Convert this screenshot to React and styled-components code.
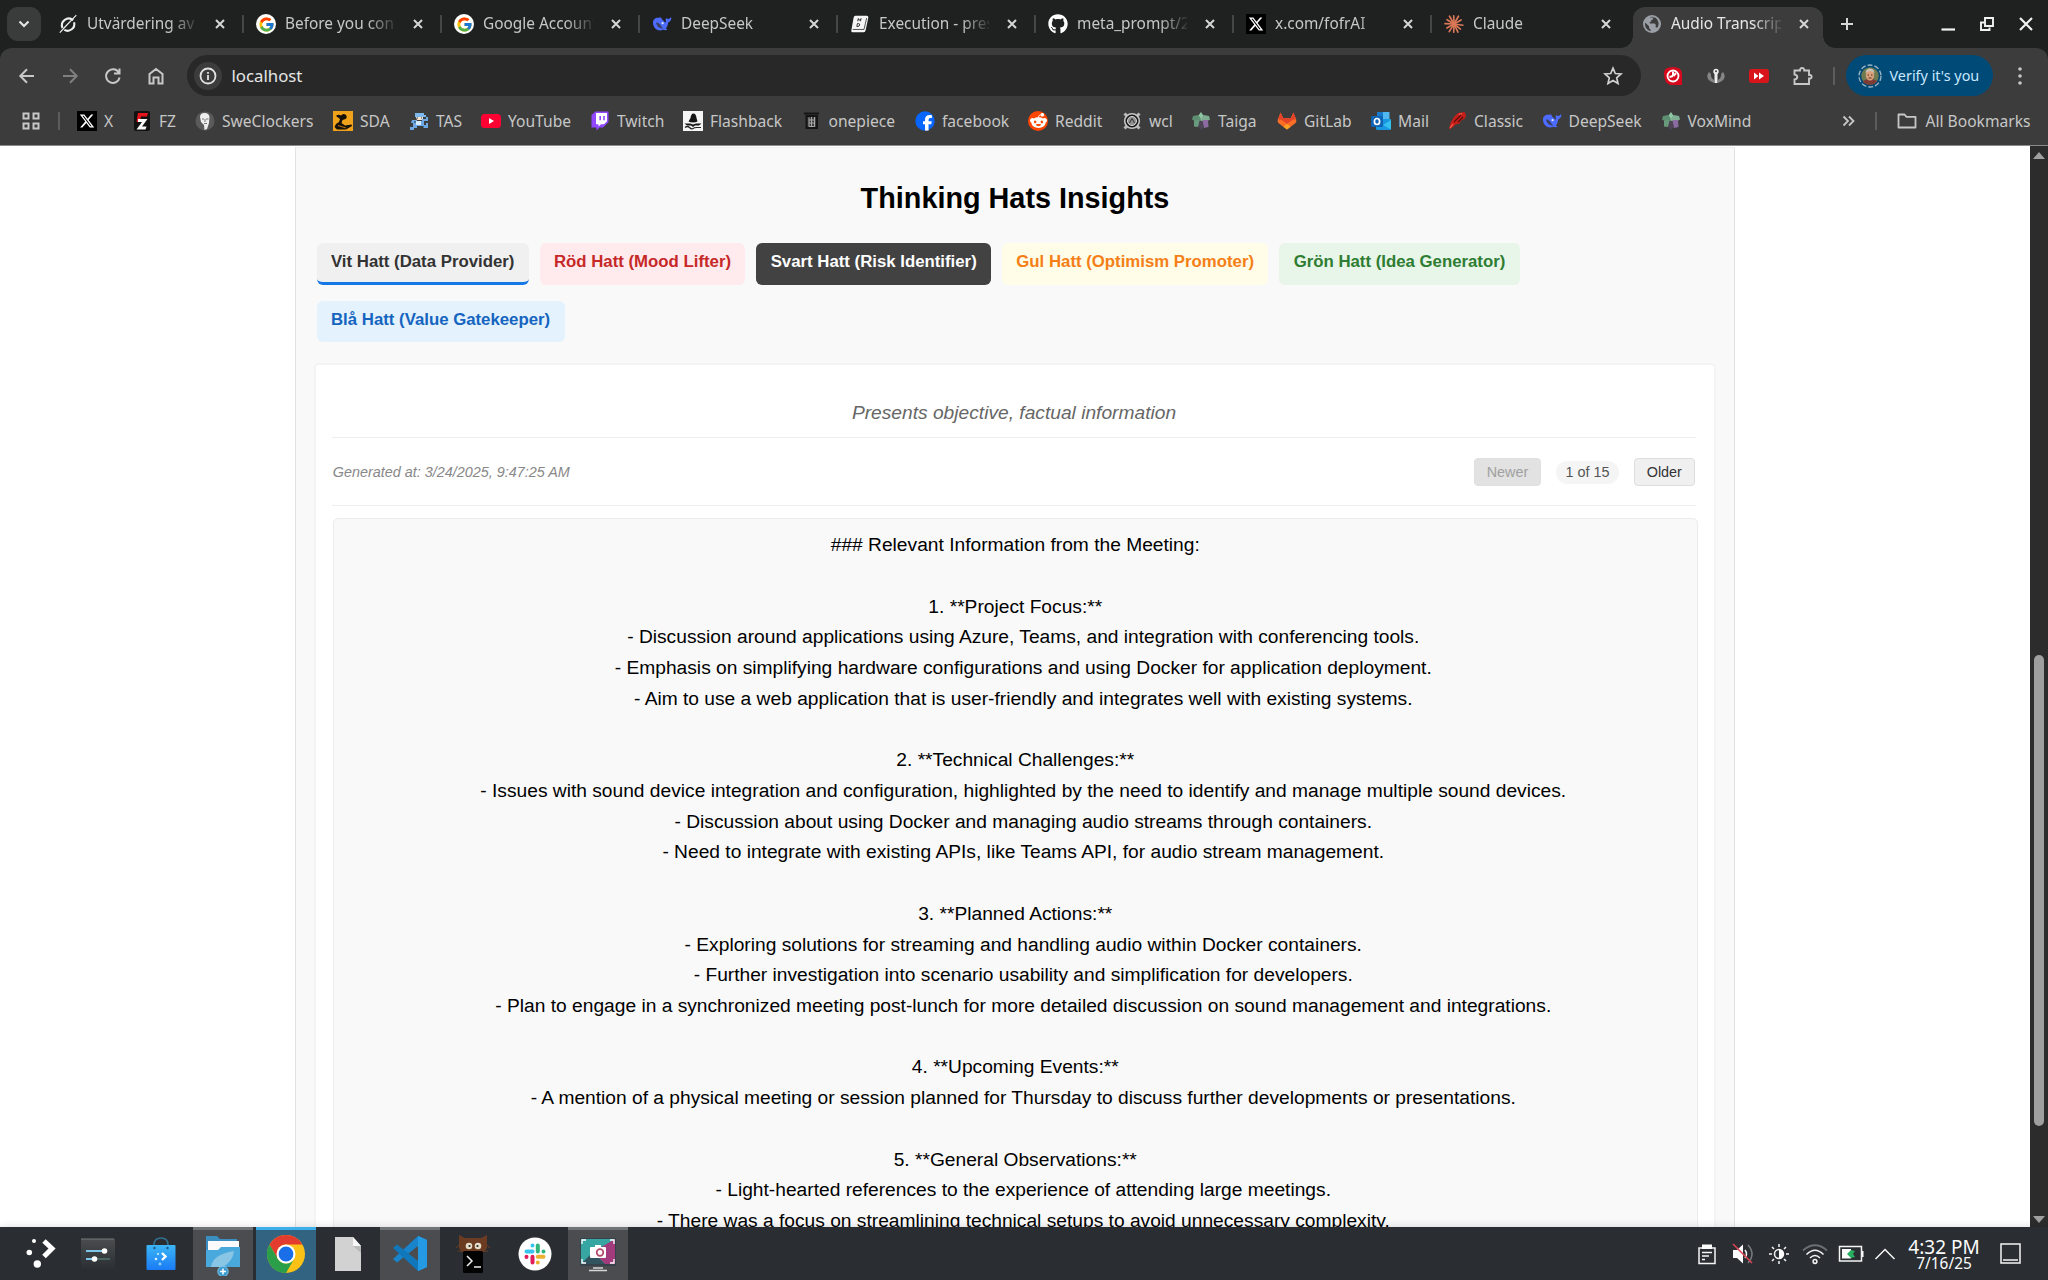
import React from "react";
import styled, { createGlobalStyle } from "styled-components";
import { FaXTwitter, FaGithub, FaRedditAlien, FaFacebookF } from "react-icons/fa6";
import { FcGoogle } from "react-icons/fc";

const Global = createGlobalStyle`
  * { box-sizing: border-box; }
  html, body { margin: 0; padding: 0; }
  body { width: 2048px; height: 1280px; overflow: hidden; background: #fff; }
`;

const Screen = styled.div`
  width: 2048px;
  height: 1280px;
  display: flex;
  flex-direction: column;
  overflow: hidden;
  font-family: "Noto Sans", sans-serif;
`;

/* ---------- tab strip ---------- */
const TabStrip = styled.div`
  height: 48px;
  flex: none;
  display: flex;
  padding-left: 7px;
  background: #1f2120;
`;
const TabSearch = styled.div`
  width: 34px;
  height: 34px;
  margin: 7px 4px 0 0;
  border-radius: 11px;
  background: #3a3b3b;
  display: flex;
  align-items: center;
  justify-content: center;
`;
const TabCell = styled.div`
  width: 198px;
  height: 48px;
  flex: none;
  padding: ${(p) => (p.$active ? "7px 4px 0" : "0 4px")};
  display: flex;
  position: relative;
  &::after {
    content: "";
    display: ${(p) => (p.$divider ? "block" : "none")};
    position: absolute;
    right: -1px;
    top: 15px;
    width: 2px;
    height: 18px;
    background: #454746;
  }
`;
const TabBody = styled.div`
  flex: 1;
  display: flex;
  align-items: center;
  padding: ${(p) => (p.$active ? "0 0 7px 9px" : "0 0 0 9px")};
  position: relative;
  border-radius: 12px 12px 0 0;
  background: ${(p) => (p.$active ? "#3c3c3c" : "transparent")};
  color: ${(p) => (p.$active ? "#e6e6e6" : "#c7c7c7")};
  &::before, &::after {
    content: "";
    display: ${(p) => (p.$active ? "block" : "none")};
    position: absolute;
    bottom: 0;
    width: 12px;
    height: 12px;
  }
  &::before { left: -12px; background: radial-gradient(circle at 0 0, transparent 11.5px, #3c3c3c 12px); }
  &::after { right: -12px; background: radial-gradient(circle at 100% 0, transparent 11.5px, #3c3c3c 12px); }
`;
const TabIcon = styled.div`
  width: 20px;
  height: 20px;
  flex: none;
  margin-right: 9px;
  display: flex;
  align-items: center;
  justify-content: center;
`;
const TabTitle = styled.div`
  width: 110px;
  flex: none;
  overflow: hidden;
  white-space: nowrap;
  font-size: 15.4px;
  line-height: 22px;
  mask-image: linear-gradient(90deg, #000 82px, rgba(0, 0, 0, 0.12) 110px);
`;
const TabClose = styled.div`
  margin-left: 14.5px;
  width: 17px;
  display: flex;
  justify-content: center;
`;
const NewTab = styled.div`
  width: 20px;
  margin-left: 10px;
  display: flex;
  align-items: center;
`;
const WindowButtons = styled.div`
  margin-left: 83px;
  display: flex;
  align-items: center;
  gap: 23px;
`;

/* ---------- toolbar ---------- */
const ToolbarBack = styled.div`
  flex: none;
  background: #1f2120;
`;
const Toolbar = styled.div`
  height: 98px;
  background: #3c3c3c;
  border-radius: 12px 12px 0 0;
  border-bottom: 1px solid #8b8b8b;
`;
const NavRow = styled.div`
  height: 55px;
  padding: 7px 0 0 14.5px;
  display: flex;
  align-items: flex-start;
`;
const NavSlot = styled.div`
  width: ${(p) => p.$w || 43}px;
  height: 41px;
  display: flex;
  align-items: center;
  flex: none;
`;
const Omnibox = styled.div`
  width: 1454px;
  height: 41px;
  flex: none;
  border-radius: 21px;
  background: #282828;
  display: flex;
  align-items: center;
  padding: 0 18px 0 7px;
  color: #e6e6e6;
  font-size: 16.8px;
  margin-right: 22px;
`;
const InfoBubble = styled.div`
  width: 28px;
  height: 28px;
  border-radius: 50%;
  background: #3c3c3c;
  margin-right: 10px;
  display: flex;
  align-items: center;
  justify-content: center;
`;
const Url = styled.div`
  flex: 1;
`;
const VLine = styled.div`
  width: 2px;
  height: 18px;
  background: #5c5c5c;
  flex: none;
`;
const VerifyPill = styled.div`
  width: 147px;
  height: 41px;
  flex: none;
  margin-right: 25px;
  border-radius: 21px;
  background: #004a77;
  display: flex;
  align-items: center;
  padding-left: 12px;
  gap: 8px;
  color: #c8e8ff;
  font-size: 14.4px;
  white-space: nowrap;
`;
const BookmarkRow = styled.div`
  height: 35px;
  display: flex;
  align-items: center;
  padding-left: 22px;
  color: #c7c7c7;
  font-size: 15.6px;
`;
const Bookmark = styled.div`
  width: ${(p) => p.$w}px;
  height: 34px;
  display: flex;
  align-items: center;
  gap: 7px;
  white-space: nowrap;
  flex: none;
`;
const BookmarkIcon = styled.div`
  width: 20px;
  height: 20px;
  display: flex;
  align-items: center;
  justify-content: center;
  flex: none;
`;
const AppsButton = styled.div`
  width: 35.5px;
  margin-right: 0;
  display: flex;
  align-items: center;
`;
const BookmarkList = styled.div`
  display: flex;
  margin-left: 17.5px;
`;
const Overflow = styled.div`
  width: 33px;
  margin-left: 88px;
  display: flex;
`;
const AllBookmarks = styled.div`
  display: flex;
  align-items: center;
  gap: 9px;
  margin-left: 20px;
  white-space: nowrap;
`;
const IconTile = styled.div`
  width: 20px;
  height: 20px;
  display: flex;
  align-items: center;
  justify-content: center;
  border-radius: ${(p) => (p.$round ? "50%" : "0")};
  background: ${(p) => p.$bg || "transparent"};
  color: ${(p) => p.$fg || "#fff"};
`;

/* ---------- page ---------- */
const Viewport = styled.div`
  flex: 1;
  min-height: 0;
  display: flex;
  overflow: hidden;
  background: #fff;
  font-family: "Liberation Sans", Arial, sans-serif;
`;
const Page = styled.div`
  width: 2030px;
  height: 100%;
  overflow: hidden;
  display: flex;
  justify-content: center;
  padding-top: 1px;
`;
const Panel = styled.div`
  width: 1440px;
  height: 1300px;
  flex: none;
  background: #f9f9f9;
  border: 1px solid #e2e2e2;
  border-top-color: #f0f0f0;
  border-bottom: 0;
  padding: 34px 18px 0;
`;
const Heading = styled.h2`
  margin: 0 0 28px;
  height: 33px;
  text-align: center;
  font-size: 28.8px;
  line-height: 33px;
  color: #000;
`;
const HatTabs = styled.div`
  display: flex;
  flex-wrap: wrap;
  gap: 16px 10.8px;
  padding-left: 2.6px;
  margin-bottom: 21px;
`;
const HatTab = styled.button`
  height: 41.6px;
  padding: 0 14.4px 0.5px;
  border: 0;
  border-bottom: 3.6px solid ${(p) => (p.$active ? "#1677e6" : p.$bg)};
  border-radius: 6px;
  background: ${(p) => p.$bg};
  color: ${(p) => p.$fg};
  font: bold 16.8px "Liberation Sans", Arial, sans-serif;
  white-space: nowrap;
`;
const Card = styled.div`
  width: 1402px;
  height: 1100px;
  border: 2px solid #f4f4f4;
  border-radius: 5px;
  background: #fff;
  padding: 37px 18px 0 16px;
`;
const Subtitle = styled.div`
  height: 36px;
  line-height: 22px;
  text-align: center;
  font-size: 19.2px;
  font-style: italic;
  color: #666;
  border-bottom: 1px solid #eee;
`;
const MetaRow = styled.div`
  height: 68px;
  padding: 1px 1.5px 0 0.7px;
  display: flex;
  align-items: center;
  border-bottom: 1px solid #eee;
  font-size: 14.4px;
`;
const Stamp = styled.div`
  flex: 1;
  font-style: italic;
  color: #888;
`;
const PageButton = styled.button`
  height: 28px;
  padding: 0 11.6px;
  border: 1px solid ${(p) => (p.$disabled ? "#e0e0e0" : "#ddd")};
  border-radius: 4px;
  background: ${(p) => (p.$disabled ? "#e2e2e2" : "#f0f0f0")};
  color: ${(p) => (p.$disabled ? "#a0a0a0" : "#333")};
  font: 14.4px "Liberation Sans", Arial, sans-serif;
`;
const Counter = styled.div`
  height: 23px;
  line-height: 23px;
  padding: 0 9.6px;
  margin: 0 15px;
  border-radius: 12px;
  background: #f5f5f5;
  color: #555;
`;
const Notes = styled.div`
  margin: 12px 0 0 1px;
  width: 1364.5px;
  height: 900px;
  padding: 11px 0 0;
  border: 1px solid #ececec;
  border-radius: 5px;
  background: #f9f9f9;
`;
const NoteLine = styled.div`
  height: 30.72px;
  line-height: 30.72px;
  font-size: 19.2px;
  text-align: center;
  white-space: pre;
  color: #000;
`;
const ScrollTrack = styled.div`
  width: 18px;
  height: 100%;
  background: #2c2c2c;
  display: flex;
  flex-direction: column;
  align-items: center;
  padding: 6px 0 4px;
`;
const ScrollThumb = styled.div`
  width: 10px;
  height: 471px;
  margin-top: 496px;
  margin-bottom: auto;
  border-radius: 5px;
  background: #9f9f9f;
`;

/* ---------- desktop panel ---------- */
const Taskbar = styled.div`
  height: 53px;
  flex: none;
  position: relative;
  background: #2a2e32;
  box-shadow: 0 0 8px rgba(0, 0, 0, 0.14);
  display: flex;
  padding-left: 6px;
`;
const TaskItem = styled.div`
  width: 60px;
  height: 53px;
  margin-right: 2.4px;
  border-top: 3px solid
    ${(p) => (p.$state === "active" ? "#3daee9" : p.$state === "open" ? "#707376" : "transparent")};
  background: ${(p) => (p.$state === "active" ? "#326482" : p.$state === "open" ? "#4a4c4f" : "transparent")};
  background-clip: padding-box;
  display: flex;
  align-items: center;
  justify-content: center;
  svg { margin-top: -3px; }
`;
const Tray = styled.div`
  margin-left: auto;
  display: flex;
  align-items: center;
  padding-right: 27px;
`;
const TraySlot = styled.div`
  width: ${(p) => p.$w}px;
  height: 28px;
  display: flex;
  align-items: center;
  justify-content: ${(p) => (p.$end ? "flex-end" : "center")};
`;
const Clock = styled.div`
  width: 86px;
  height: 50px;
  text-align: center;
  color: #fcfcfc;
`;
const Time = styled.div`
  font-size: 19px;
  line-height: 20px;
  margin-top: 8px;
`;
const DateText = styled.div`
  font-size: 15.4px;
  line-height: 14px;
`;

/* ---------- drawings ---------- */
const Svg = ({ w = 20, h = w, vb, children, ...rest }) => (
  <svg width={w} height={h} viewBox={vb || `0 0 ${w} ${h}`} fill="none" {...rest}>
    {children}
  </svg>
);
const CloseX = ({ s = 10, c = "#d6d6d6", sw = 2 }) => (
  <Svg w={s} vb="0 0 10 10"><path d="M1 1L9 9M9 1L1 9" stroke={c} strokeWidth={(sw * 10) / s} /></Svg>
);
const Grok = () => (
  <Svg w={20}>
    <path d="M15.2 6.2A6.8 6.8 0 0 0 4.5 14M6.3 15.9A6.8 6.8 0 0 0 16.1 8.2" stroke="#eee" strokeWidth="2.1" />
    <path d="M1.8 18.7L18.3 1.2 7.4 12.4Z" fill="#eee" stroke="#eee" strokeWidth="1.1" />
  </Svg>
);
const Google = () => <IconTile $bg="#fff" $round><FcGoogle size={17} /></IconTile>;
const XIcon = () => <IconTile $bg="#000"><FaXTwitter size={16} /></IconTile>;
const Whale = () => (
  <Svg w={20}>
    <path
      d="M1 8.5C1 5.4 3.5 3.6 6.2 3.8c1.5.1 2.4-.4 3-.1.9.5.1 1.1.9 1.7 1.3.8 2.4 1.8 3 3.3.9-.2 1-1.3.6-2.6-.2-1 .2-2 .8-1.8.9.4 1.7 1 2.5.5.8-.4 1.4-1.6 2.2-1.2.5.3.1 1.6-.6 2.9-.7 1.3-1.7 1.7-2.5 2-.1 2.600-1 4.600-2.300 5.900.7.3 1.800.6 1.500 1.100-.7.9-2.900.9-4.400.2C6.300 18 1 14.600 1 8.500Z"
      fill="#4d6bfe"
    />
    <path d="M4 8.600c2.200-.4 3.700 1.200 4.900 3.100 1 1.600 1.800 2.300 2.500 2.600-3 .8-6.600-1.300-7.400-5.700Z" fill="#3a3f5c" />
    <circle cx="10.600" cy="9.200" r="1.100" fill="#dfe5ff" />
  </Svg>
);
const MdBook = () => (
  <Svg w={22} h={20}>
    <path d="M6 .8H18.500Q20.500.8 20.100 3L17.200 16.800Q16.700 19.200 14.500 19.200H3Q1 19.200 1.500 16.800L4 2.800Q4.300.8 6 .8Z" fill="#f5f5f5" />
    <path d="M3 16H15.400L18.300 3.500" stroke="#444" strokeWidth="1" />
    <path d="M8.500 7L9.100 4 10.300 6 12.100 4 11.500 7M8.200 9.500H9.500Q11 9.700 10.600 11.200 10.100 12.700 8.700 12.700H7.500Z" stroke="#222" strokeWidth="1" />
  </Svg>
);
const ClaudeIcon = () => (
  <Svg w={20}>
    <g stroke="#d97757" strokeWidth="1.700" strokeLinecap="round">
      {[8, 38, 64, 92, 122, 150, 182, 212, 240, 268, 300, 330].map((a, i) => (
        <line key={a} x1="10" y1="10" x2={i % 2 ? 18.2 : 19} y2="10" transform={`rotate(${a} 10 10)`} />
      ))}
    </g>
  </Svg>
);
const Globe = () => (
  <Svg w={18}>
    <circle cx="9" cy="9" r="9" fill="#9aa0a6" />
    <path d="M2.200 7.500L6 11.200V12.600Q6 14 7.500 14.200V16.300A7.400 7.400 0 0 1 2.200 7.500ZM6.500 2.600Q7.800 1.600 10 1.800V3.500Q10 5 8.200 5V6.700H6.700V8.500H11.500Q12.700 8.700 12.700 10V12.500H14.500A7.400 7.400 0 0 0 12.200 2.500" fill="#3c3c3c" />
  </Svg>
);
const Fz = () => (
  <Svg w={20}>
    <rect x="2" width="16" height="20" rx="2" fill="#111" />
    <path d="M6 2H16L15 5.500H9L8.500 8H13L12 11H4.500Z" fill="#e5131b" />
    <path d="M6 8H15.500L10 15.500H14.500L13.500 18.500H4.500L10 11H6Z" fill="#f7f7f7" />
  </Svg>
);
const Swe = () => (
  <Svg w={20}>
    <circle cx="10" cy="10" r="9.500" fill="#5a5a5a" />
    <path d="M5 6Q5 2 9.500 2T14.500 6L14 12 12 18 9.500 19 9 14 6 11Z" fill="#eee" />
    <path d="M7 8H9M11 8H13.500M10 8V11M9 12.500H12" stroke="#777" />
  </Svg>
);
const Sda = () => (
  <Svg w={20}>
    <rect width="20" height="20" fill="#f0a21a" />
    <path d="M3 5Q5 3 8 4.500 10 2 12.500 3.500 15 6 12.500 8L9.500 9 8.500 12 12 14.500 18.500 13.500 19 15 13 18.500 4 18.500 1.500 16 3 13 6 11 7 8Z" fill="#151008" />
    <path d="M5 14.500L13 17" stroke="#b06a12" strokeWidth="1.200" />
  </Svg>
);
const Tas = () => (
  <Svg w={20}>
    <path d="M6 2H15V4H17V6H6Z" fill="#7db9ee" />
    <path d="M7 6H14V9H8Z" fill="#f6e3cf" />
    <path d="M3 9H8V10H13V8H17V6H19V10H15V14H17V12H19V17H14V15H8V17H5V19H1V16H4V12H2Z" fill="#6ea9e4" />
    <path d="M7 10H12V14H7Z" fill="#d8ecff" />
    <path d="M8 7H9M12 7H13M5 11H7M13 16H15" stroke="#24364c" />
  </Svg>
);
const YouTube = () => (
  <Svg w={20}><rect y="3" width="20" height="14" rx="3.500" fill="#ff0033" /><path d="M8 7L13 10 8 13Z" fill="#fff" /></Svg>
);
const Twitch = () => (
  <Svg w={20}>
    <path d="M1.500 4L5.500.5H18.500V11L13 16.500H9.500L6.500 19.500V16.500H1.500Z" fill="#9146ff" />
    <path d="M6 2H17V10.300L14 13.300H11L8.500 15.600V13.300H6Z" fill="#fff" />
    <path d="M10.200 5V9.300M14 5V9.300" stroke="#9146ff" strokeWidth="1.600" />
  </Svg>
);
const Flashback = () => (
  <Svg w={20}>
    <rect width="20" height="20" fill="#f5f5f5" />
    <path d="M7.500 7Q8 2.500 10.500 2.500T13.500 7L14.500 10.500Q10 12.500 5.500 10.500ZM1.500 12.500L7 12.500 10 13.500 13 12.500 18.500 12.500 16 14.500 12 14.500 10 16 8 14.500 4 14.500Z" fill="#151515" />
    <path d="M2 16.500Q4.500 14.500 6.500 16.500T10 17.500 13.500 16.500 18 16.500" stroke="#222" strokeWidth="1.200" />
  </Svg>
);
const OnePiece = () => (
  <Svg w={20}>
    <path d="M2 2.500H17M4.500 5H15V17H4.500Z" stroke="#151515" strokeWidth="2" />
    <path d="M7 6.500V15.500M9.500 6V15.500M12.500 6V15.500M7 9H12.500M7 12H12.500M7 15.500H12.500" stroke="#a9a9a9" />
  </Svg>
);
const Facebook = () => (
  <Svg w={20}>
    <circle cx="10" cy="10" r="9.700" fill="#0866ff" />
    <g transform="translate(4.600 4)"><FaFacebookF size={15.7} color="#fff" /></g>
  </Svg>
);
const Reddit = () => <IconTile $bg="#ff4500" $round><FaRedditAlien size={17} /></IconTile>;
const Wcl = () => (
  <Svg w={20}>
    <path d="M2.500 2.500L17.500 17.500M17.500 2.500L2.500 17.500" stroke="#bbb" strokeWidth="3" />
    <circle cx="10" cy="10" r="7.300" fill="#171717" stroke="#c4c4c4" strokeWidth="1.600" />
    <circle cx="10" cy="10" r="4.500" fill="#8f8f8f" stroke="#ddd" />
    <path d="M7.500 12L10 7.500 12.500 12" stroke="#333" />
  </Svg>
);
const Taiga = () => (
  <Svg w={20}>
    <path d="M10 1L13 5.500 11.500 10 7.500 9 7 5Z" fill="#8fc7a4" />
    <path d="M2 5L7.500 4 10 8 7 12 1 8.500Z" fill="#5f8f72" />
    <path d="M18 5L12.500 4 10 8 13 12 19 8.500Z" fill="#7fae93" />
    <path d="M3 15.500L3 9.500 8 9 9.500 13 6.500 16Z" fill="#6a9a7c" />
    <path d="M17.500 16L17 9 12 9 10.500 13 13 17Z" fill="#8b6ba0" />
    <path d="M10 19L7 16 8.500 10H11.500L13 16Z" fill="#4d4456" />
  </Svg>
);
const GitLab = () => (
  <Svg w={20}>
    <path d="M10 18.500L2 12.500Q0 10.800.8 8.500L3.600 1.500 6.300 7.300H13.700L16.400 1.500 19.200 8.500Q20 10.800 18 12.500Z" fill="#fc6d26" />
    <path d="M3.600 1.500L6.300 7.300H13.700L16.400 1.500 19 8.200Q16 8 13.500 10.200L10 12.800 6.500 10.200Q4 8 1 8.200Z" fill="#e24329" />
    <path d="M6.300 15.700L10 12.900 13.700 15.700 10 18.500Z" fill="#fca326" />
  </Svg>
);
const Mail = () => (
  <Svg w={20}>
    <path d="M6 1H18.500V9H6Z" fill="#50b7f0" /><path d="M6 1H12V6H6Z" fill="#1a78c8" />
    <path d="M5 8H20V17.500Q20 19 18.500 19H6.500Q5 19 5 17.500Z" fill="#1996e0" />
    <path d="M20 9L12 14 20 18.500Z" fill="#35c0f2" />
    <rect y="5" width="12" height="11" rx="1" fill="#0f63b5" />
    <ellipse cx="6" cy="10.500" rx="2.600" ry="3" stroke="#fff" strokeWidth="1.700" />
  </Svg>
);
const Classic = () => (
  <Svg w={20}>
    <path d="M2 18.500L3.500 12 7 6 11 2 17.500 1 19 4 18 7.500 14 9.500 12.500 12.500 8.500 13.500 5.500 16.500Z" fill="#c81e1a" />
    <path d="M7 11L14 4M11 11L16 6" stroke="#5b0d0b" strokeWidth="1.300" />
    <path d="M3 17L6 13M12 3.500L15 2.500" stroke="#ef6a50" strokeWidth="1.200" />
  </Svg>
);

const tabs = [
  ["Utvärdering av", <Grok />],
  ["Before you cont", <Google />],
  ["Google Account", <Google />],
  ["DeepSeek", <Whale />],
  ["Execution - prese", <MdBook />],
  ["meta_prompt/20", <FaGithub size={20} color="#fff" />],
  ["x.com/fofrAI", <XIcon />],
  ["Claude", <ClaudeIcon />],
  ["Audio Transcript", <Globe />],
];

const bookmarks = [
  ["X", 55, <XIcon />],
  ["FZ", 63, <Fz />],
  ["SweClockers", 138, <Swe />],
  ["SDA", 76, <Sda />],
  ["TAS", 72, <Tas />],
  ["YouTube", 109, <YouTube />],
  ["Twitch", 93, <Twitch />],
  ["Flashback", 118.5, <Flashback />],
  ["onepiece", 113.5, <OnePiece />],
  ["facebook", 113, <Facebook />],
  ["Reddit", 94, <Reddit />],
  ["wcl", 69, <Wcl />],
  ["Taiga", 86, <Taiga />],
  ["GitLab", 94, <GitLab />],
  ["Mail", 76, <Mail />],
  ["Classic", 94.5, <Classic />],
  ["DeepSeek", 119, <Whale />],
  ["VoxMind", 93, <Taiga />],
];

const hats = [
  ["Vit Hatt (Data Provider)", "#f0f0f0", "#333"],
  ["Röd Hatt (Mood Lifter)", "#ffebee", "#c62828"],
  ["Svart Hatt (Risk Identifier)", "#424242", "#fff"],
  ["Gul Hatt (Optimism Promoter)", "#fffde7", "#f57f17"],
  ["Grön Hatt (Idea Generator)", "#e8f5e9", "#2e7d32"],
  ["Blå Hatt (Value Gatekeeper)", "#e3f2fd", "#1565c0"],
];

const notes = [
  "### Relevant Information from the Meeting:",
  "",
  "1. **Project Focus:**",
  "   - Discussion around applications using Azure, Teams, and integration with conferencing tools.",
  "   - Emphasis on simplifying hardware configurations and using Docker for application deployment.",
  "   - Aim to use a web application that is user-friendly and integrates well with existing systems.",
  "",
  "2. **Technical Challenges:**",
  "   - Issues with sound device integration and configuration, highlighted by the need to identify and manage multiple sound devices.",
  "   - Discussion about using Docker and managing audio streams through containers.",
  "   - Need to integrate with existing APIs, like Teams API, for audio stream management.",
  "",
  "3. **Planned Actions:**",
  "   - Exploring solutions for streaming and handling audio within Docker containers.",
  "   - Further investigation into scenario usability and simplification for developers.",
  "   - Plan to engage in a synchronized meeting post-lunch for more detailed discussion on sound management and integrations.",
  "",
  "4. **Upcoming Events:**",
  "   - A mention of a physical meeting or session planned for Thursday to discuss further developments or presentations.",
  "",
  "5. **General Observations:**",
  "   - Light-hearted references to the experience of attending large meetings.",
  "   - There was a focus on streamlining technical setups to avoid unnecessary complexity.",
];

const ic = { stroke: "#c7c7c7", strokeWidth: 2 };

function BrowserTabs() {
  const last = tabs.length - 1;
  return (
    <TabStrip>
      <TabSearch>
        <Svg w={12} h={8}><path d="M1.500 1.500L6 6 10.500 1.500" stroke="#e3e3e3" strokeWidth="2.200" /></Svg>
      </TabSearch>
      {tabs.map(([title, icon], i) => (
        <TabCell key={title} $active={i === last} $divider={i < last - 1}>
          <TabBody $active={i === last}>
            <TabIcon>{icon}</TabIcon>
            <TabTitle>{title}</TabTitle>
            <TabClose><CloseX /></TabClose>
          </TabBody>
        </TabCell>
      ))}
      <NewTab>
        <Svg w={20}><path d="M10 4V16M4 10H16" stroke="#d6d6d6" strokeWidth="2" /></Svg>
      </NewTab>
      <WindowButtons>
        <Svg w={16}><path d="M1.500 13.500H15" stroke="#f2f2f2" strokeWidth="2.200" /></Svg>
        <Svg w={16}>
          <path d="M6 2H14V10H6ZM5 6.500H2V14H10.500V11.500" stroke="#f2f2f2" strokeWidth="1.900" />
        </Svg>
        <Svg w={16}><path d="M2 2L14 14M14 2L2 14" stroke="#f2f2f2" strokeWidth="2.200" /></Svg>
      </WindowButtons>
    </TabStrip>
  );
}

function BrowserToolbar() {
  return (
    <ToolbarBack>
      <Toolbar>
        <NavRow>
          <NavSlot><Svg w={24}><path d="M19 12H5.500M12 5.300L5.300 12 12 18.700" {...ic} /></Svg></NavSlot>
          <NavSlot><Svg w={24}><path d="M5 12H18.500M12 5.300L18.700 12 12 18.700" stroke="#808080" strokeWidth="2" /></Svg></NavSlot>
          <NavSlot><Svg w={24}><path d="M17.700 8.500A6.800 6.800 0 1 0 18.600 13.500M18.500 4.500V9.500H13" {...ic} /></Svg></NavSlot>
          <NavSlot><Svg w={24}><path d="M5.500 10L12 5 18.500 10V19.500H14.500V13.500H9.500V19.500H5.500Z" {...ic} /></Svg></NavSlot>
          <Omnibox>
            <InfoBubble>
              <Svg w={18}><circle cx="9" cy="9" r="7.500" stroke="#e3e3e3" strokeWidth="1.800" /><path d="M9 8V13M9 5V6.800" stroke="#e3e3e3" strokeWidth="1.800" /></Svg>
            </InfoBubble>
            <Url>localhost</Url>
            <Svg w={20}><path d="M10 2.200L12.300 7.500 18 8 13.700 11.800 15 17.400 10 14.400 5 17.400 6.300 11.800 2 8 7.700 7.500Z" stroke="#d0d0d0" strokeWidth="1.700" /></Svg>
          </Omnibox>
          <NavSlot>
            <Svg w={20}>
              <path d="M1 7Q1 1 10 1 19 1 19 8V19H8Q1 18 1 7Z" fill="#d8091c" />
              <circle cx="10" cy="10" r="5.500" stroke="#fff" strokeWidth="1.800" />
              <path d="M10 10V5.500M10 10L6.500 11M10.500 10L13 7" stroke="#fff" strokeWidth="2" />
            </Svg>
          </NavSlot>
          <NavSlot>
            <Svg w={20}>
              <path d="M3 6Q-1 11 4 15L8 17V14Q4 11 5 8ZM17 6Q21 11 16 15L12 17V14Q16 11 15 8Z" fill="#858585" />
              <circle cx="10" cy="5.500" r="2.700" fill="#eee" /><path d="M10 7V17" stroke="#eee" strokeWidth="3" />
              <circle cx="10" cy="5.300" r="1" fill="#444" />
            </Svg>
          </NavSlot>
          <NavSlot>
            <Svg w={20}><rect y="3" width="20" height="14" rx="3" fill="#d8151b" /><path d="M5 6.500L9.500 10 5 13.500ZM10 6.500L15 10 10 13.500Z" fill="#fff" /></Svg>
          </NavSlot>
          <NavSlot $w={41}>
            <Svg w={22}><path d="M2.500 5.500H8V4.500A2.200 2.200 0 0 1 12.200 4.500V5.500H17V10H18.300A1.800 1.800 0 0 1 18.300 13.500H17V19H2.500V14.500Q5.300 14 5.300 12T2.500 9.500Z" stroke="#c7c7c7" strokeWidth="1.900" /></Svg>
          </NavSlot>
          <NavSlot $w={13}><VLine /></NavSlot>
          <VerifyPill>
            <Svg w={24}>
              <circle cx="12" cy="12" r="11" stroke="#9db6c6" strokeWidth="1.300" strokeDasharray="5 2" />
              <circle cx="12" cy="12" r="8.700" fill="#6e7a4f" />
              <path d="M5 18Q6 15 12 15T19 18Q16 21 12 21T5 18Z" fill="#7d3b35" />
              <ellipse cx="12" cy="11" rx="4.200" ry="5.500" fill="#d9a27d" />
              <path d="M7.500 9Q8 4.500 12 4.500T16.500 9Q14 7 12 7T7.500 9Z" fill="#c9c2b5" />
              <path d="M9.500 11H11M13 11H14.500M10.500 14H13.500" stroke="#5a3525" />
            </Svg>
            Verify it's you
          </VerifyPill>
          <NavSlot $w={20}>
            <Svg w={4} h={22}><circle cx="2" cy="4" r="1.800" fill="#c7c7c7" /><circle cx="2" cy="11" r="1.800" fill="#c7c7c7" /><circle cx="2" cy="18" r="1.800" fill="#c7c7c7" /></Svg>
          </NavSlot>
        </NavRow>
        <BookmarkRow>
          <AppsButton>
            <Svg w={18}>
              <path d="M1.500 1.500H6.500V6.500H1.500ZM11.500 1.500H16.500V6.500H11.500ZM1.500 11.500H6.500V16.500H1.500ZM11.500 11.500H16.500V16.500H11.500Z" {...ic} />
            </Svg>
          </AppsButton>
          <VLine />
          <BookmarkList>
            {bookmarks.map(([name, w, icon]) => (
              <Bookmark key={name} $w={w}>
                <BookmarkIcon>{icon}</BookmarkIcon>
                {name}
              </Bookmark>
            ))}
          </BookmarkList>
          <Overflow>
            <Svg w={13} h={12}><path d="M1.500 1.500L6 6 1.500 10.500M7 1.500L11.500 6 7 10.500" stroke="#c7c7c7" strokeWidth="1.800" /></Svg>
          </Overflow>
          <VLine />
          <AllBookmarks>
            <Svg w={20} h={18}><path d="M1.500 2.500H7.500L9.500 4.800H18.500V15.500H1.500Z" {...ic} strokeWidth="1.800" strokeLinejoin="round" /></Svg>
            All Bookmarks
          </AllBookmarks>
        </BookmarkRow>
      </Toolbar>
    </ToolbarBack>
  );
}

function Insights() {
  return (
    <Viewport>
      <Page>
        <Panel>
          <Heading>Thinking Hats Insights</Heading>
          <HatTabs>
            {hats.map(([name, bg, fg], i) => (
              <HatTab key={name} $bg={bg} $fg={fg} $active={i === 0}>{name}</HatTab>
            ))}
          </HatTabs>
          <Card>
            <Subtitle>Presents objective, factual information</Subtitle>
            <MetaRow>
              <Stamp>Generated at: 3/24/2025, 9:47:25 AM</Stamp>
              <PageButton $disabled>Newer</PageButton>
              <Counter>1 of 15</Counter>
              <PageButton>Older</PageButton>
            </MetaRow>
            <Notes>
              {notes.map((line, i) => <NoteLine key={i}>{line}</NoteLine>)}
            </Notes>
          </Card>
        </Panel>
      </Page>
      <ScrollTrack>
        <Svg w={12} h={7}><path d="M0 7L6 0 12 7Z" fill="#9f9f9f" /></Svg>
        <ScrollThumb />
        <Svg w={12} h={7}><path d="M0 0L6 7 12 0Z" fill="#9f9f9f" /></Svg>
      </ScrollTrack>
    </Viewport>
  );
}

const Kickoff = () => (
  <Svg w={40}>
    <circle cx="18" cy="7" r="2" fill="#fff" /><circle cx="13.300" cy="18.500" r="2.800" fill="#fff" /><circle cx="21.300" cy="30" r="3.700" fill="#fff" />
    <path d="M28 7L36 14.500 28 22.500" stroke="#fff" strokeWidth="5" />
  </Svg>
);
const Settings = () => (
  <Svg w={36}>
    <defs><linearGradient id="st" x2="0" y2="1"><stop stopColor="#4a4c4e" /><stop offset="1" stopColor="#2a2e32" /></linearGradient></defs>
    <path d="M1 3H35V34H1Z" fill="url(#st)" /><path d="M1 3H34" stroke="#77797b" />
    <path d="M6 15H24" stroke="#7cc4e8" strokeWidth="2" /><path d="M6 23H14" stroke="#7cc4e8" strokeWidth="2" /><path d="M15 23H30" stroke="#4d7471" strokeWidth="1.500" />
    <circle cx="24.500" cy="15" r="2.800" fill="#fff" /><circle cx="14.500" cy="23" r="2.800" fill="#fff" />
  </Svg>
);
const Discover = () => (
  <Svg w={36}>
    <defs><linearGradient id="dc" x2="0" y2="1"><stop stopColor="#3cb6f5" /><stop offset="1" stopColor="#1a7bf5" /></linearGradient></defs>
    <path d="M11 13V9Q11 2 18 2T25 9V13" stroke="#31708f" strokeWidth="1.600" />
    <rect x="3.500" y="9" width="29" height="25" rx="1" fill="url(#dc)" />
    <circle cx="11.500" cy="12" r="1.200" fill="#1b5c8e" /><circle cx="24.500" cy="12" r="1.200" fill="#1b5c8e" />
    <path d="M19 17L22.500 20.500 19 24" stroke="#fff" strokeWidth="2.400" />
    <circle cx="15" cy="18" r="1" fill="#d9f0ff" /><circle cx="13" cy="23" r="1.300" fill="#d9f0ff" /><circle cx="17" cy="28" r="1.400" fill="#8fd0ff" />
  </Svg>
);
const Files = () => (
  <Svg w={40} h={44}>
    <path d="M3 4H14L17 7H34V18H3Z" fill="#3a8fc0" /><rect x="5" y="9" width="31" height="12" fill="#fbfbfb" />
    <path d="M3 18H15L18 15H37V35H3Z" fill="#4aa9dc" />
    <path d="M8 35Q10 22 31 19 30 29 20 35Z" fill="#9fcfe8" opacity=".75" />
    <circle cx="20" cy="39.500" r="5.200" fill="#3a9bd0" stroke="#86c4e2" /><path d="M20 36.500V42.500M17 39.500H23" stroke="#fff" strokeWidth="1.500" />
  </Svg>
);
const Chrome = () => (
  <Svg w={40}>
    <circle cx="20" cy="20" r="19" fill="#fbc116" />
    <path d="M3.500 10.500A19 19 0 0 1 36.500 10.500H20A9.500 9.500 0 0 0 11.800 15.200L11.700 24.700Z" fill="#e33b2e" />
    <path d="M3.500 10.500A19 19 0 0 0 20 39L28.200 24.700A9.500 9.500 0 0 1 11.800 24.700Z" fill="#2a9e48" />
    <circle cx="20" cy="20" r="9.500" fill="#fff" /><circle cx="20" cy="20" r="7.400" fill="#1a6fe8" />
  </Svg>
);
const FilePage = () => (
  <Svg w={30} h={38}><path d="M2 2H20L28 11V36H2Z" fill="#d2d2d2" /><path d="M20 2L28 11H20Z" fill="#f7f7f7" /><path d="M20 11H28L28 18Z" fill="#b9b9b9" /></Svg>
);
const VsCode = () => (
  <Svg w={36} h={38}>
    <path d="M26 1L35 5V32L26 36Z" fill="#2a9de8" /><path d="M26 1L1 24L5 27.500L26 11Z" fill="#1784cc" />
    <path d="M26 36L1 13L5 9.500L26 26Z" fill="#1177bb" /><path d="M26 1L35 5V32L26 36V11Z" fill="#249ae5" />
  </Svg>
);
const Kitty = () => (
  <Svg w={34} h={42}>
    <path d="M3 2L9 5H25L31 2V15L28 19H6L3 15Z" fill="#6b3c22" /><path d="M3 12L0 15M31 12L34 15M2 18H6M28 18H32" stroke="#6b3c22" />
    <circle cx="13" cy="13" r="3.300" fill="#e6dcc8" /><circle cx="22" cy="13" r="3.300" fill="#e6dcc8" /><circle cx="13.500" cy="13" r="1.100" fill="#222" /><circle cx="21.500" cy="13" r="1.100" fill="#222" />
    <rect x="7" y="18" width="20" height="22" rx="1.500" fill="#020202" /><path d="M11 23L16 28 11 33M18 34H25" stroke="#eee" strokeWidth="1.500" />
  </Svg>
);
const Slack = () => (
  <Svg w={34}>
    <circle cx="17" cy="17" r="16.500" fill="#fff" />
    <g strokeWidth="4" strokeLinecap="round">
      <path d="M14.500 8.500V8.600M8.500 14.500H14.500" stroke="#36c5f0" /><path d="M19.800 8.500V14.500M25.500 14.500V14.600" stroke="#2eb67d" />
      <path d="M14.500 19.800V25.500M8.500 19.800V19.900" stroke="#e01e5a" /><path d="M19.800 19.800H25.500M19.800 25.500V25.600" stroke="#ecb22e" />
    </g>
  </Svg>
);
const Spectacle = () => (
  <Svg w={38}>
    <rect x="1" y="3" width="36" height="28" fill="#36414a" /><rect x="2" y="4" width="34" height="25" fill="#37a5a2" />
    <path d="M36 4V29H26L14 17Z" fill="#a23a7c" /><path d="M2 29L14 17 26 29Z" fill="#31545f" />
    <path d="M3 9V5H7M31 5H35V9M3 24V28H7M31 28H35V24" stroke="#fff" strokeWidth="1.300" />
    <rect x="11" y="12" width="16" height="11" rx="1" fill="#fff" /><rect x="16" y="10" width="6" height="3" fill="#fff" /><circle cx="21" cy="17.500" r="3.300" stroke="#b5476a" strokeWidth="1.700" />
    <path d="M14 33H24M10 35.500H28" stroke="#d7d7d7" strokeWidth="1.500" />
  </Svg>
);
const tasks = [
  ["", <Kickoff />], ["", <Settings />], ["", <Discover />], ["open", <Files />], ["active", <Chrome />],
  ["", <FilePage />], ["open", <VsCode />], ["", <Kitty />], ["", <Slack />], ["open", <Spectacle />],
];

function DesktopPanel() {
  const w = { stroke: "#f5f5f5", strokeWidth: 1.5 };
  return (
    <Taskbar>
      {tasks.map(([state, icon], i) => <TaskItem key={i} $state={state}>{icon}</TaskItem>)}
      <Tray>
        <TraySlot $w={36}><Svg w={20} h={22}><path d="M2 5H18V20.500H2Z" {...w} /><path d="M5 1.500H15V6H5Z" fill="#fcfcfc" /><path d="M5 9.500H15M5 13H12M5 16.500H8" {...w} /></Svg></TraySlot>
        <TraySlot $w={36}>
          <Svg w={24} h={22}><path d="M2 7H6L12 1.500V20.500L6 15H2Z" fill="#fcfcfc" /><path d="M14 7Q17 11 14 15" {...w} /><path d="M17 2Q25 11 17 20" stroke="#777b7e" strokeWidth="1.500" /><path d="M2 1L21 20" stroke="#da4453" strokeWidth="1.600" /></Svg>
        </TraySlot>
        <TraySlot $w={36}>
          <Svg w={22}><circle cx="11" cy="11" r="4.500" {...w} /><path d="M11 6.500A4.500 4.500 0 0 1 11 15.500Z" fill="#fcfcfc" /><path d="M11 1V4M11 18V21M1 11H4M18 11H21M4 4L6 6M16 16L18 18M18 4L16 6M6 16L4 18" {...w} /></Svg>
        </TraySlot>
        <TraySlot $w={36}>
          <Svg w={26} h={22}><path d="M1 7.500Q13-3 25 7.500" stroke="#6c7073" strokeWidth="1.700" /><path d="M4.500 11.500Q13 3 21.500 11.500M8 15Q13 10 18 15" {...w} /><circle cx="13" cy="18.500" r="1.900" {...w} /></Svg>
        </TraySlot>
        <TraySlot $w={36}>
          <Svg w={26} h={18}><rect x="1.500" y="1.500" width="22" height="14.500" {...w} /><path d="M24 6H25.500V12H24Z" fill="#fcfcfc" /><rect x="4" y="4" width="9" height="9.500" fill="#fcfcfc" /><path d="M9 9L13 5 17 6 15 9 17 12 13 13Z" fill="#27ae60" /></Svg>
        </TraySlot>
        <TraySlot $w={32}><Svg w={22} h={12}><path d="M1.500 11L11 1.500 20.500 11" {...w} /></Svg></TraySlot>
        <Clock><Time>4:32 PM</Time><DateText>7/16/25</DateText></Clock>
        <TraySlot $w={34} $end><Svg w={21}><path d="M1 1H20V20H1ZM3 17H18" {...w} /></Svg></TraySlot>
      </Tray>
    </Taskbar>
  );
}

export default function App() {
  return (
    <>
      <Global />
      <Screen>
        <BrowserTabs />
        <BrowserToolbar />
        <Insights />
        <DesktopPanel />
      </Screen>
    </>
  );
}
